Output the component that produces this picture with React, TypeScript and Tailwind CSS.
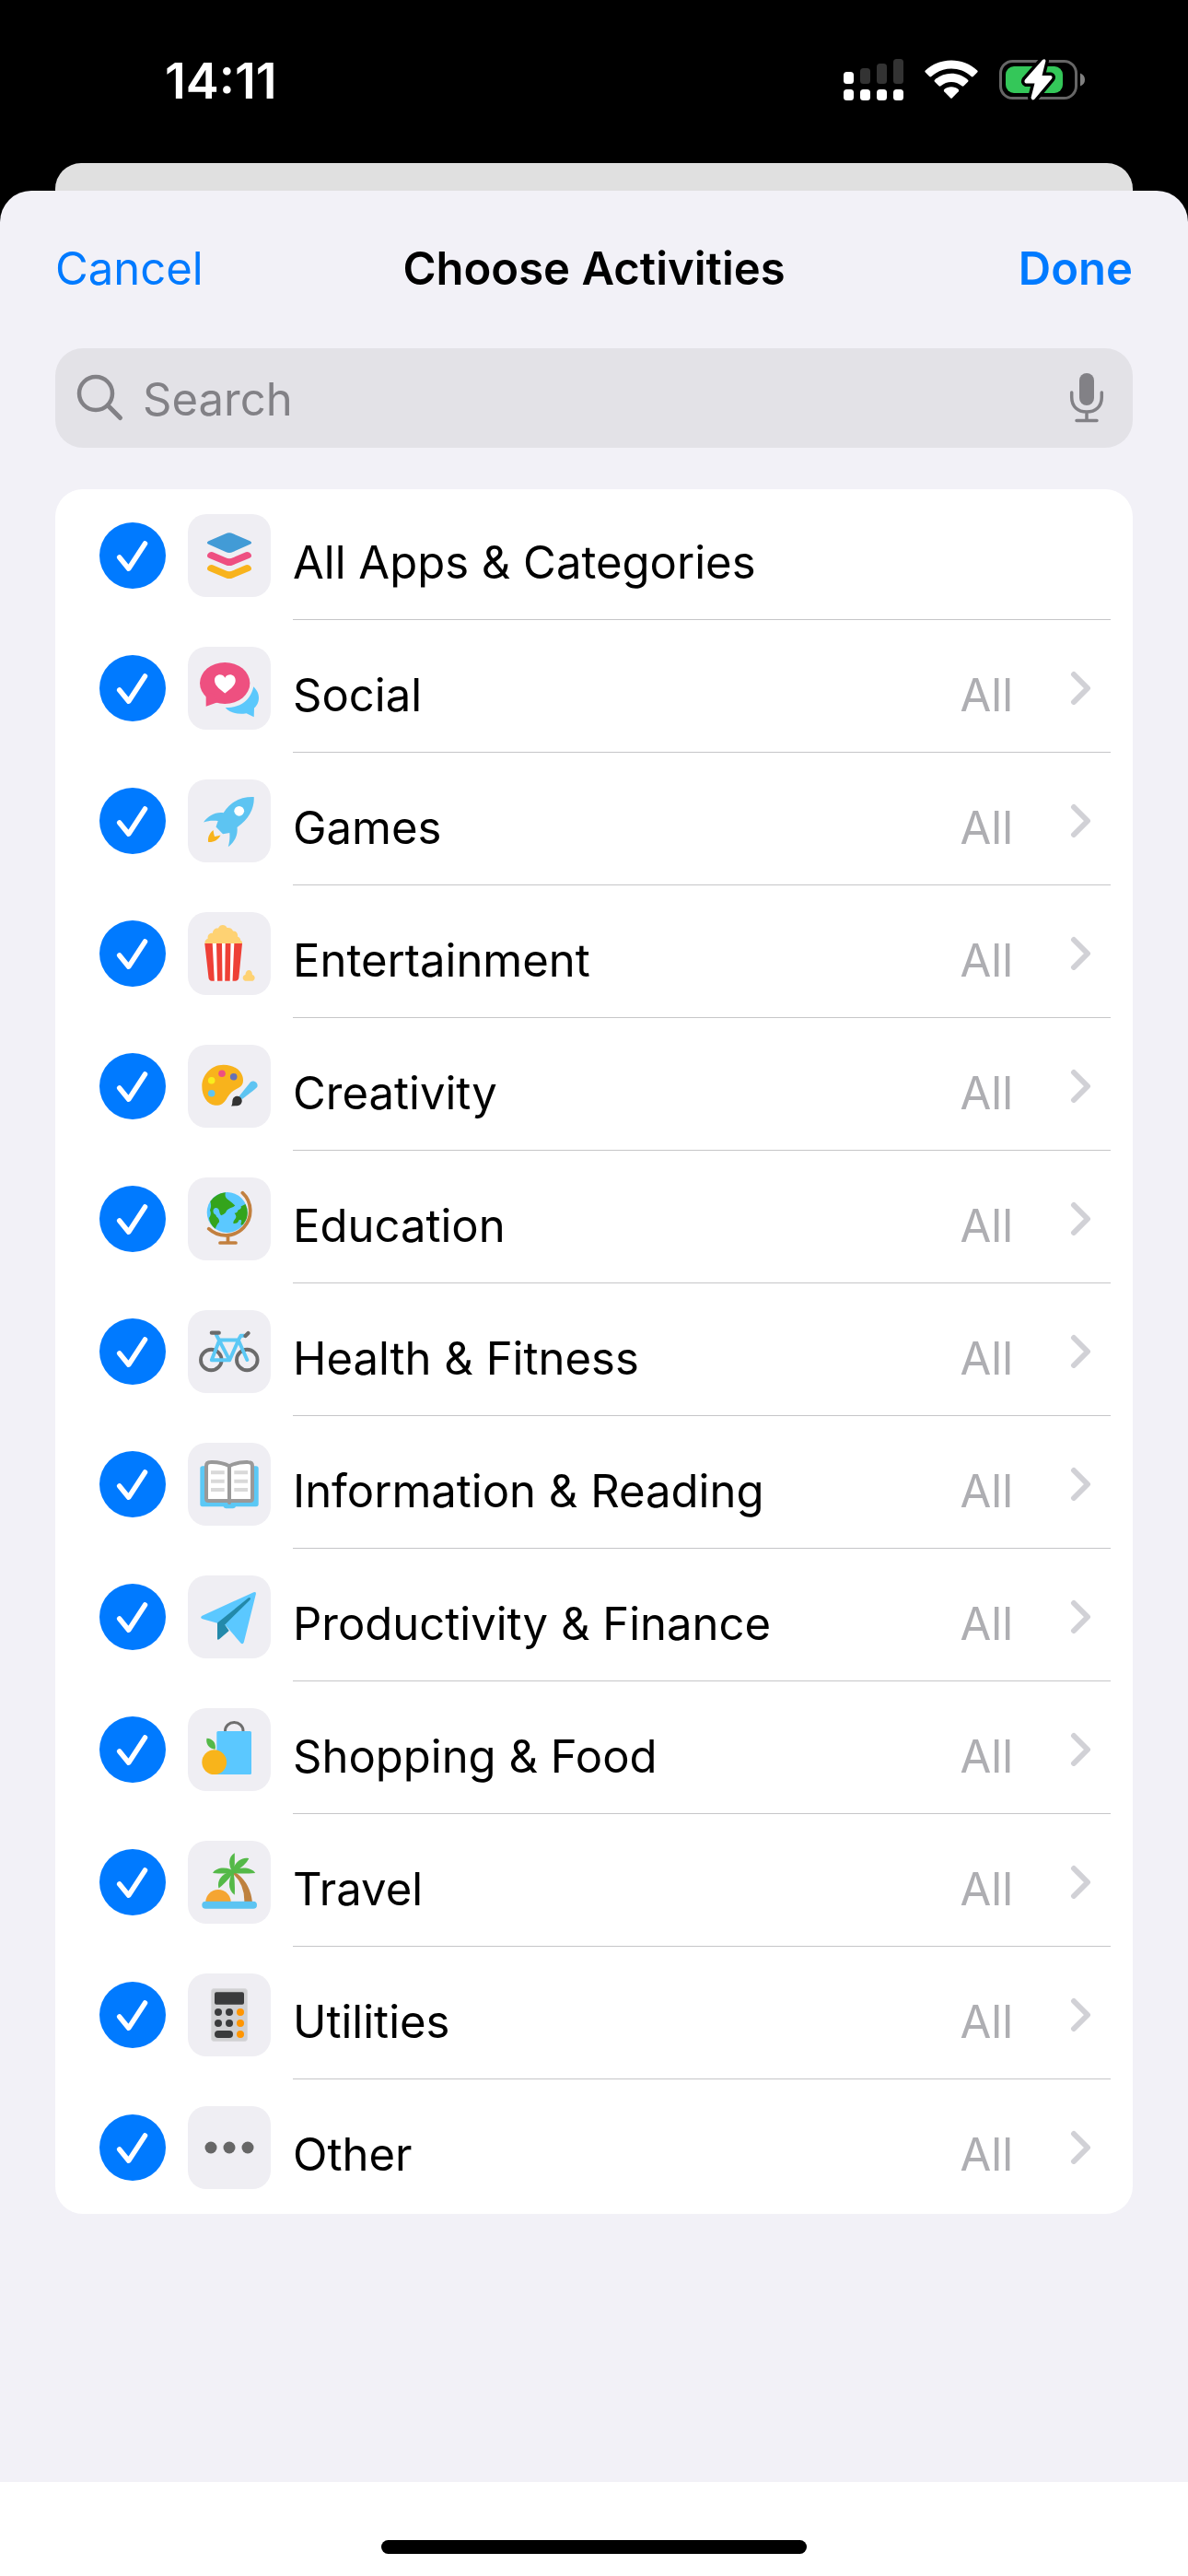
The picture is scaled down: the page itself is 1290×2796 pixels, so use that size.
import { useState, type ReactNode } from "react";

const icons: Record<string, ReactNode> = {
  all: (
    <>
      <path d="M41 21.2Q45 19.3 49 21.2L67.5 29.2Q70.8 31 67.5 32.8L49 41Q45 43 41 41L22.5 32.8Q19.2 31 22.5 29.2Z" fill="#429bd6" />
      <path d="M22 42.7Q24 40.5 27 41.3L41 47.3Q45 49 49 47.3L63 41.3Q66 40.5 68 42.7Q70.5 46 67 47.8L49 55.2Q45 57 41 55.2L23 47.8Q19.5 46 22 42.7Z" fill="#ee4f81" />
      <path d="M22 56.7Q24 54.5 27 55.3L41 61.3Q45 63 49 61.3L63 55.3Q66 54.5 68 56.7Q70.5 60 67 61.8L49 69.2Q45 71 41 69.2L23 61.8Q19.5 60 22 56.7Z" fill="#f8b31c" />
    </>
  ),
  social: (
    <>
      <path d="M71.3 43.3C76 48 77 52 77 55.5C77 60 75 64 72 66.5L71.7 76.3L63.5 72.3C54 74 45 71.5 40.7 66C56 66.5 68 59 71.3 43.3Z" fill="#5bc8fc" />
      <ellipse cx="40.2" cy="39.5" rx="27.2" ry="22.5" fill="#ee5080" />
      <path d="M19.7 51V64.8L33 60L27 50Z" fill="#ee5080" />
      <path d="M40.3 50.5C36.5 47 29 43 29 36.5C29 30 37 28 40.3 33.7C43.6 28 51.7 30 51.7 36.5C51.7 43 44.1 47 40.3 50.5Z" fill="#fff" />
    </>
  ),
  games: (
    <>
      <path d="M71.7 19C72.5 30 67 43 53.5 52C54.5 60 51 68 43.7 73.3C45.3 68 45.7 63 45.3 58L38 59.2L30.5 51.5L32.7 45C27 44.3 22 44.7 17 46.5C22 40 29.5 35 38.7 36.3C46 24 58 18.5 71.7 19Z" fill="#5dc4f2" />
      <circle cx="55.7" cy="34.3" r="5.4" fill="#fff" />
      <path d="M27.5 55C23 59 21.3 63.5 22.2 68C27.5 68.5 33 66 35.5 60.5Q31 61.5 29 62Q28 59 27.5 55Z" fill="#f8b31c" />
    </>
  ),
  entertainment: (
    <>
      <path d="M18.5 34.5C18 31 20 29 21.7 28.7C21 25 23.5 22.5 27 22.7C27 19 30 17 33 17.5C34.5 13 41 13 42.5 17C46 16.5 48.5 18.5 49 20.5C53 20.5 54.5 23.5 54 26.5C56.5 27.5 57.5 29.5 57 30.5C59 31.5 59.5 33 58.7 34.5Z" fill="#fed273" />
      <path d="M26 34H51L50 74.7H28Z" fill="#fff" />
      <path d="M18.3 34H26.7L28.8 74.7H26Q23 74.5 22.5 71.5ZM31 34H37L37.5 74.7H32ZM40.7 34H46.5L45.7 74.7H40.2ZM50.3 34H59L55.3 71.5Q54.7 74.5 51.5 74.7H48.5Z" fill="#ee4036" />
      <path d="M62 74.7C59 73.5 58.8 69 62.4 68C62.6 61.5 69.8 61 70 68C73.5 69 73.5 73.5 70.5 74.7Q66 75 62 74.7Z" fill="#fed273" />
    </>
  ),
  creativity: (
    <>
      <path d="M38.7 21.7C51 21.7 60 29 60 38.5C60 49 50 45.5 43 57C38.5 65.5 34 66 29.5 65.7C20.5 65 15.3 55 15.3 45.3C15.3 33 25 21.7 38.7 21.7Z" fill="#f8b31c" />
      <circle cx="37" cy="31.3" r="3.8" fill="#ee4f81" />
      <circle cx="49.7" cy="34.7" r="3.8" fill="#6671b5" />
      <circle cx="25.7" cy="38.7" r="3.8" fill="#f9ed1d" />
      <circle cx="25.7" cy="52.7" r="3.8" fill="#5dc4f2" />
      <path d="M68 40.5C71 38 77 41 75.3 45.8Q74.7 47 59 59L55.5 56Z" fill="#5dc4f2" />
      <path d="M47 66.5Q48.5 65 48.3 61.5C48.5 57.5 51 55.7 54 55.7C57.5 56 59 58.5 58.7 61.5C58 65.5 55 66.3 52 66.2Z" fill="#333" />
    </>
  ),
  education: (
    <>
      <circle cx="42.7" cy="38" r="22" fill="#5bc8ff" />
      <path d="M41 16.2Q39.5 20 42.5 23.3Q45 25 48 27.5L51.3 30.6Q50 32 46 33.3Q42 35 41 38.3Q39 40.5 36 41.3Q34.5 40 34 36C33 31.5 27 32 27.5 37C28 40.5 30.5 39.5 31 42.5Q34.5 45 34 48.5Q32 50 29.7 55.7Q23.5 50.5 23 44Q26 40 24 35.5Q26 31 24.3 26Q30 17.5 41 16.2Z" fill="#34a41c" />
      <path d="M62.5 29Q66 36 64 44Q63 47 60 51Q56.5 53.5 58 48.5Q59 45 55.5 46.2Q54 50.5 49.5 50Q48.8 48 51 45.5Q54 42.5 50.5 38.8Q54 38.5 54.5 35.5Q59 34 57.5 31.5Z" fill="#34a41c" />
      <path d="M59.3 16.7A26.5 26.5 0 0 1 22.7 55.7M43.5 64V71M35 71H52" fill="none" stroke="#c2803f" strokeWidth="3.7" strokeLinecap="round" />
    </>
  ),
  health: (
    <g fill="none" strokeLinecap="round" strokeLinejoin="round" strokeWidth="3.9">
      <circle cx="25.3" cy="54" r="11.3" stroke="#6b6b6b" />
      <circle cx="64.3" cy="54" r="11.3" stroke="#6b6b6b" />
      <path d="M31 27L45.3 54.3H25.8L34.3 32.5H55L45.3 54.3M64.3 54L54.8 32.5L57.5 27.7H61" stroke="#5bc8f5" />
      <path d="M25.8 24.7H33.8M62.5 28L65.5 25" stroke="#6b6b6b" strokeWidth="4.2" />
    </g>
  ),
  reading: (
    <>
      <path d="M16 25.3H74Q76.7 25.3 76.7 28V66.5Q76.7 69.3 74 69.3H52Q51 71.3 49 71.3H41.5Q39.5 71.3 38.5 69.3H16Q13.3 69.3 13.3 66.5V28Q13.3 25.3 16 25.3Z" fill="#5bc8f5" />
      <path d="M20 25Q20 21 24.5 21Q36 20.5 45 25.3Q54 20.5 65.5 21Q70 21 70 25V60.5Q70 63 67.5 63H22.5Q20 63 20 60.5ZM45 25.3V65" fill="#fff" stroke="#999" strokeWidth="4" strokeLinecap="round" strokeLinejoin="round" />
      <path d="M25 32.3H39.7M25 41.7H39.7M25 51H39.7M50.3 32.3H65M50.3 41.7H65M50.3 51H65" stroke="#d9d9d9" strokeWidth="4" />
    </>
  ),
  productivity: (
    <>
      <path d="M71.5 18.2Q74.5 17.5 73.8 20.5L60.8 72.5Q59.7 75.5 57.3 73.3L40 53L32 51.7L16 47.3Q12.5 46 15.5 43.7Z" fill="#5bc8ff" />
      <path d="M32 51.5L65.5 24.5Q67.5 23.5 68 25Q68 26 67 27L40.2 53.5L44.7 60L34 69.3Q32 70.5 32 68.5Z" fill="#2389aa" />
    </>
  ),
  shopping: (
    <>
      <path d="M40.5 26V24.5A9.7 9 0 0 1 60 24.5V26" fill="none" stroke="#6e6e6e" strokeWidth="3" />
      <rect x="31.3" y="25" width="37.7" height="47" rx="1.5" fill="#5bc8ff" />
      <circle cx="28.7" cy="58.7" r="13.4" fill="#f8b41b" />
      <path d="M20.5 32.7C27 33 31 38 29.7 44.8C23 44 19 38.5 20.5 32.7Z" fill="#54b948" />
    </>
  ),
  travel: (
    <>
      <path d="M19.3 66.5A13.7 13.5 0 0 1 46.7 66.5Z" fill="#f5a532" />
      <path d="M48 35Q51 33 54 36Q68 47 70 67H61.3Q62 47 48 35Z" fill="#be813f" />
      <g fill="#54b948">
        <path d="M49.5 36C43 26 44 17 50.8 13.3Q51.5 25 49.5 36Z" />
        <path d="M47 35.5C50 24 58 17 66.3 19.2Q62 28 47 35.5Z" />
        <path d="M46 35C53 27.5 69 28 73.2 35Q60 36 46 35Z" />
        <path d="M52 35C45 27.5 31 28 27 35Q39 36 52 35Z" />
        <path d="M52 32C38 34 31 42 33.5 51.5Q40 47 52 32Z" />
        <path d="M49.5 33C43 43 43.5 54 50.8 58.7Q51.5 46 49.5 33Z" />
      </g>
      <rect x="15.3" y="65.7" width="59.7" height="8" rx="4" fill="#5bc4f2" />
    </>
  ),
  utilities: (
    <>
      <rect x="25.5" y="16.5" width="39" height="57" rx="3" fill="#d0d0d2" stroke="#dadadd" />
      <rect x="29" y="20.3" width="32" height="13.4" rx="2" fill="#3a3b3c" />
      <g fill="#3a3b3c">
        <circle cx="33" cy="42" r="4" />
        <circle cx="45" cy="42" r="4" />
        <circle cx="33" cy="54" r="4" />
        <circle cx="45" cy="54" r="4" />
        <rect x="29" y="62" width="20" height="8" rx="4" />
      </g>
      <g fill="#ff9501">
        <circle cx="57" cy="42" r="4" />
        <circle cx="57" cy="54" r="4" />
        <circle cx="57" cy="66" r="4" />
      </g>
    </>
  ),
  other: (
    <g fill="#666">
      <circle cx="25" cy="45" r="6.5" />
      <circle cx="45" cy="45" r="6.5" />
      <circle cx="65" cy="45" r="6.5" />
    </g>
  ),
};

const categories = [
  { id: "all", name: "All Apps & Categories" },
  { id: "social", name: "Social" },
  { id: "games", name: "Games" },
  { id: "entertainment", name: "Entertainment" },
  { id: "creativity", name: "Creativity" },
  { id: "education", name: "Education" },
  { id: "health", name: "Health & Fitness" },
  { id: "reading", name: "Information & Reading" },
  { id: "productivity", name: "Productivity & Finance" },
  { id: "shopping", name: "Shopping & Food" },
  { id: "travel", name: "Travel" },
  { id: "utilities", name: "Utilities" },
  { id: "other", name: "Other" },
];

function StatusBar() {
  return (
    <div className="flex h-[177px] items-start justify-between pt-[58px] pr-[112px] pl-[179px]">
      <time className="text-[54px] leading-[60px] font-semibold text-white">14:11</time>
      <div className="flex items-center gap-[23px] pt-[6px]">
        <svg className="h-[45px] w-[65px]" viewBox="0 0 65 45" aria-label="Signal">
          <g fill="#fff">
            <rect y="14" width="11" height="13" rx="3.5" />
            <rect y="33" width="11" height="12" rx="3.5" />
            <rect x="18" y="33" width="11" height="12" rx="3.5" />
            <rect x="36" y="33" width="11" height="12" rx="3.5" />
            <rect x="54" y="33" width="11" height="12" rx="3.5" />
          </g>
          <g fill="#333">
            <rect x="18" y="10" width="11" height="17" rx="3.5" />
            <rect x="36" y="5" width="11" height="22" rx="3.5" />
            <rect x="54" width="11" height="27" rx="3.5" />
          </g>
        </svg>
        <svg className="h-[43px] w-[58px]" viewBox="0 0 58 43" aria-label="Wi-Fi" fill="#fff">
          <path d="M.8 11.5C16 -3.3 42 -3.3 57.2 11.5Q58.2 12.5 57.2 13.5L52.8 18Q51.8 18.9 50.7 18C38.5 6.7 19.5 6.7 7.3 18Q6.2 18.9 5.2 18L.8 13.5Q-.2 12.5 .8 11.5Z" />
          <path d="M11 21.7C21 12.5 37 12.5 47 21.7Q48 22.8 47 23.8L42.5 28.2Q41.5 29.1 40.4 28.2C34 22.5 24 22.5 17.6 28.2Q16.5 29.1 15.5 28.2L11 23.8Q10 22.8 11 21.7Z" />
          <path d="M21.3 32C25.5 28.3 32.5 28.3 36.7 32Q37.8 33.1 36.8 34.2L30 41.2Q29 42.2 28 41.2L21.2 34.2Q20.2 33.1 21.3 32Z" />
        </svg>
        <svg className="h-[45px] w-[93px]" viewBox="0 0 93 45" aria-label="Battery charging">
          <rect x="1.5" y="2.5" width="82" height="40" rx="13" fill="none" stroke="#666" strokeWidth="3" />
          <path d="M88 15.5Q93 17.5 93 22.5Q93 27.5 88 29.5Z" fill="#808080" />
          <rect x="7" y="8" width="62" height="29" rx="9" fill="#34c759" />
          <path d="M47 1Q50 -1 50.5 2L46.5 18H56Q58.5 19 57 21.5L38.5 43.5Q35.5 46 34.5 42L38.5 26.5H29Q26.5 25.5 28 22.5Z" fill="#fff" stroke="#000" strokeWidth="7" paintOrder="stroke" strokeLinejoin="round" />
        </svg>
      </div>
    </div>
  );
}

type RowProps = { id: string; name: string; checked: boolean; onToggle: () => void; last: boolean };

function CategoryRow({ id, name, checked, onToggle, last }: RowProps) {
  return (
    <li className="flex h-[144px] items-start pr-6 pl-12">
      <span className="relative mt-9 size-[72px] shrink-0">
        <input
          id={id}
          type="checkbox"
          checked={checked}
          onChange={onToggle}
          className="peer block size-[72px] appearance-none rounded-full border-4 border-[#c7c7cc] checked:border-0 checked:bg-[#007aff]"
        />
        <svg className="pointer-events-none absolute inset-0 hidden size-[72px] peer-checked:block" viewBox="0 0 72 72" fill="none" stroke="#fff" strokeWidth="5.5" strokeLinecap="round" strokeLinejoin="round" aria-hidden="true">
          <path d="M21.7 38L31.7 50.2L49.5 23" />
        </svg>
      </span>
      <span className="mt-[27px] ml-6 size-[90px] shrink-0 rounded-[20px] bg-[#efeef3]">
        <svg className="size-[90px]" viewBox="0 0 90 90" aria-hidden="true">{icons[id]}</svg>
      </span>
      <div className={last ? "ml-6 flex h-[142px] min-w-0 flex-1 items-center" : "ml-6 flex h-[142px] min-w-0 flex-1 items-center border-b border-[#c6c6c8]"}>
        <label htmlFor={id} className="flex-1 truncate pt-[18px] leading-[60px]">{name}</label>
        {id !== "all" && (
          <button type="button" className="flex items-center gap-[62px] pr-[21px] text-[#aeaeb2]" aria-label={"Show " + name}>
            <span className="pt-[18px] leading-[60px]">All</span>
            <svg className="h-[38px] w-[23px]" viewBox="0 0 23 38" fill="none" stroke="#d1d1d6" strokeWidth="6" strokeLinecap="round" strokeLinejoin="round" aria-hidden="true">
              <path d="M4 5L19 20L4 35" />
            </svg>
          </button>
        )}
      </div>
    </li>
  );
}

export default function App() {
  const [selected, setSelected] = useState<string[]>(categories.map((c) => c.id));
  const toggle = (id: string) => setSelected((s) => (s.includes(id) ? s.filter((x) => x !== id) : [...s, id]));

  return (
    <div className="flex min-h-screen flex-col bg-black font-['Inter',sans-serif] text-[49px] text-black">
      <StatusBar />
      <div className="mx-[60px] h-[30px] rounded-t-[28px] bg-[#e0e0e0]" />
      <main className="flex flex-1 flex-col rounded-t-[34px] bg-[#f2f1f7] px-[60px]">
        <header className="grid grid-cols-[1fr_auto_1fr] items-center pt-[55px] leading-[60px]">
          <button type="button" className="justify-self-start text-[#007aff]">Cancel</button>
          <h1 className="font-semibold">Choose Activities</h1>
          <button type="button" className="justify-self-end font-semibold text-[#007aff]">Done</button>
        </header>
        <div className="mt-14 flex h-[108px] items-center rounded-[30px] bg-[#e3e2e7] pr-[30px] pl-[23px]">
          <svg className="size-[52px] shrink-0" viewBox="0 0 52 52" fill="none" stroke="#828186" strokeWidth="4.5" strokeLinecap="round" aria-hidden="true">
            <circle cx="21" cy="21" r="18" />
            <path d="M34 34L47.5 47.5" strokeWidth="5" />
          </svg>
          <input type="search" placeholder="Search" aria-label="Search" className="ml-5 min-w-0 flex-1 bg-transparent pt-1 leading-[60px] outline-none placeholder:text-[#828186]" />
          <button type="button" aria-label="Dictate">
            <svg className="h-[54px] w-[40px]" viewBox="0 0 40 54" fill="none" stroke="#828186" strokeWidth="3.5" strokeLinecap="round" aria-hidden="true">
              <rect x="12" y="0" width="16" height="35" rx="8" fill="#828186" stroke="none" />
              <path d="M3.7 21V26C3.7 36.5 10.5 42 20 42C29.5 42 36.3 36.5 36.3 26V21M20 42V51M9 51.5H31" />
            </svg>
          </button>
        </div>
        <ul className="my-[45px] rounded-[30px] bg-white">
          {categories.map((c, i) => (
            <CategoryRow key={c.id} id={c.id} name={c.name} checked={selected.includes(c.id)} onToggle={() => toggle(c.id)} last={i === categories.length - 1} />
          ))}
        </ul>
      </main>
      <footer className="flex h-[102px] items-start justify-center bg-white pt-[63px]">
        <div className="h-[15px] w-[462px] rounded-full bg-black" />
      </footer>
    </div>
  );
}
